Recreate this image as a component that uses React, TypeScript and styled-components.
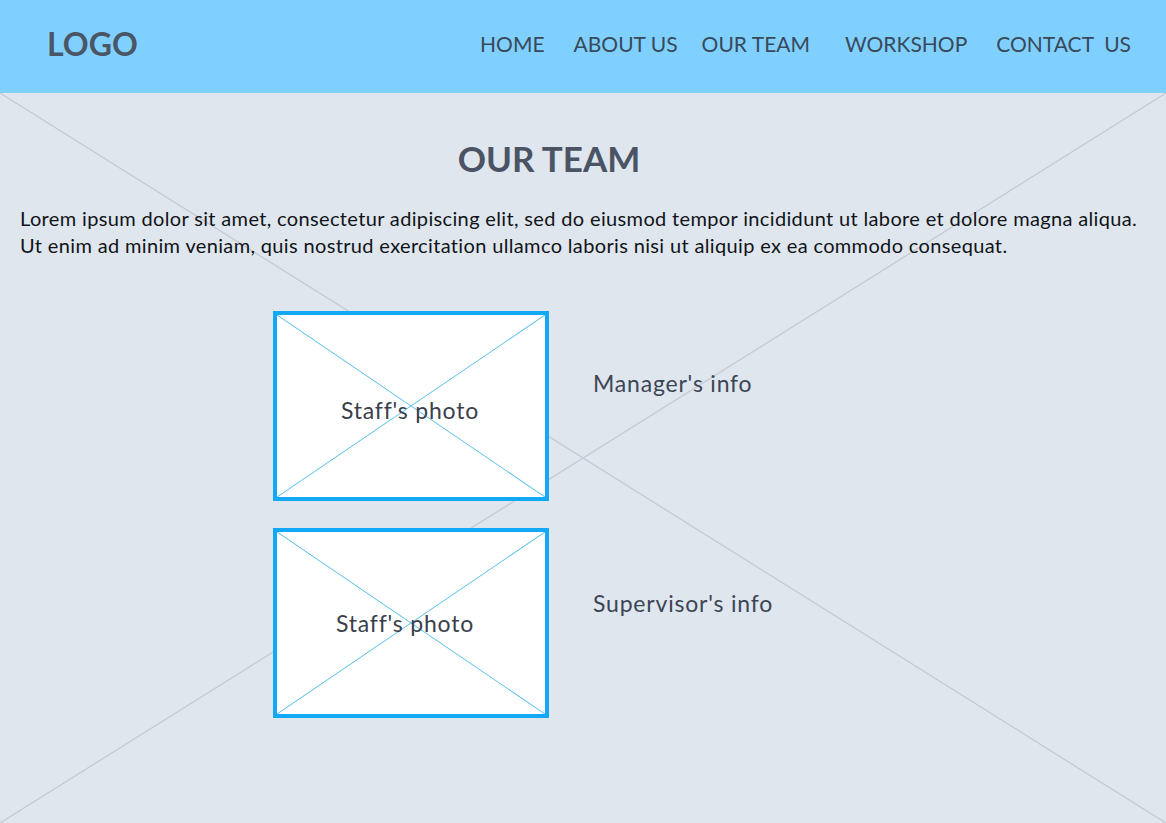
import React from "react";
import styled, { createGlobalStyle } from "styled-components";

const Global = createGlobalStyle`
  html, body { margin: 0; padding: 0; }
  body { font-family: Lato, "Open Sans", sans-serif; background: #dfe6ee; }
  * { box-sizing: border-box; }
`;

const Page = styled.div`
  width: 1166px;
  min-height: 823px;
  display: flex;
  flex-direction: column;
  overflow: hidden;
`;

const Header = styled.header`
  height: 93px;
  flex: none;
  background: #80d0ff;
  display: flex;
  align-items: center;
  justify-content: space-between;
  padding: 0 35px 6px 47px;
`;

const Logo = styled.div`
  font-family: Lato, sans-serif;
  font-weight: 700;
  font-size: 32px;
  line-height: 1;
  color: #4a5666;
`;

const Nav = styled.nav`
  display: flex;
  align-items: center;
`;

const NavLink = styled.a<{ $gap: number }>`
  font-family: Lato, sans-serif;
  font-size: 21px;
  line-height: 1;
  color: #38495a;
  text-decoration: none;
  margin-left: ${(p) => p.$gap}px;
  white-space: pre;
`;

const Main = styled.main`
  position: relative;
  flex: 1;
  min-height: 730px;
  padding: 47px 20px 40px 20px;
  display: flex;
  flex-direction: column;
`;

const Backdrop = styled.svg`
  position: absolute;
  inset: 0;
  width: 100%;
  height: 100%;
  pointer-events: none;
`;

const Content = styled.div`
  position: relative;
  display: flex;
  flex-direction: column;
`;

const Title = styled.h1`
  margin: 0;
  font-family: Lato, sans-serif;
  font-weight: 700;
  font-size: 35px;
  line-height: 36px;
  color: #4a5464;
  text-align: center;
  padding-right: 68px;
`;

const Lead = styled.p`
  margin: 29px 0 0 0;
  font-family: Lato, sans-serif;
  font-size: 20px;
  line-height: 27px;
  letter-spacing: 0.35px;
  font-variant-ligatures: none;
  color: #111418;
  white-space: nowrap;
`;

const Team = styled.div`
  margin-top: 52px;
  padding-left: 253px;
  display: flex;
  flex-direction: column;
  gap: 27px;
`;

const Member = styled.div`
  display: flex;
  align-items: flex-start;
  gap: 44px;
`;

const Photo = styled.div<{ $shift: number }>`
  position: relative;
  width: 276px;
  height: 190px;
  border: 4px solid #12a8f6;
  background: #ffffff;
  display: flex;
  align-items: center;
  justify-content: center;
  padding-top: ${(p) => p.$shift}px;
`;

const PhotoCross = styled.svg`
  position: absolute;
  inset: 0;
  width: 100%;
  height: 100%;
`;

const PhotoLabel = styled.span`
  position: relative;
  font-family: Lato, sans-serif;
  font-size: 23px;
  line-height: 1;
  letter-spacing: 0.8px;
  font-variant-ligatures: none;
  color: #3a404b;
`;

const Info = styled.div<{ $top: number }>`
  padding-top: ${(p) => p.$top}px;
  font-family: Lato, sans-serif;
  font-size: 23px;
  line-height: 1;
  letter-spacing: 0.8px;
  font-variant-ligatures: none;
  color: #3c4554;
`;

const nav = [
  { label: "HOME", gap: 0 },
  { label: "ABOUT US", gap: 29 },
  { label: "OUR TEAM", gap: 24 },
  { label: "WORKSHOP", gap: 35 },
  { label: "CONTACT  US", gap: 29 },
];

const members = [
  { info: "Manager's info", shift: 8, offset: -1, top: 61 },
  { info: "Supervisor's info", shift: -2, offset: -6, top: 64 },
];

function Cross({ color, width }: { color: string; width: number }) {
  return (
    <>
      <line x1="0" y1="0" x2="100" y2="100" stroke={color} strokeWidth={width} vectorEffect="non-scaling-stroke" />
      <line x1="100" y1="0" x2="0" y2="100" stroke={color} strokeWidth={width} vectorEffect="non-scaling-stroke" />
    </>
  );
}

export default function App() {
  return (
    <Page>
      <Global />
      <Header>
        <Logo>LOGO</Logo>
        <Nav>
          {nav.map((n) => (
            <NavLink key={n.label} href="#" $gap={n.gap}>
              {n.label}
            </NavLink>
          ))}
        </Nav>
      </Header>
      <Main>
        <Backdrop viewBox="0 0 100 100" preserveAspectRatio="none">
          <Cross color="#c3cad6" width={1.3} />
        </Backdrop>
        <Content>
          <Title>OUR TEAM</Title>
          <Lead>
            Lorem ipsum dolor sit amet, consectetur adipiscing elit, sed do eiusmod tempor incididunt ut labore et dolore magna aliqua.
            <br />
            Ut enim ad minim veniam, quis nostrud exercitation ullamco laboris nisi ut aliquip ex ea commodo consequat.
          </Lead>
          <Team>
            {members.map((m) => (
              <Member key={m.info}>
                <Photo $shift={m.shift}>
                  <PhotoCross viewBox="0 0 100 100" preserveAspectRatio="none">
                    <Cross color="#5cc0ec" width={1} />
                  </PhotoCross>
                  <PhotoLabel style={{ left: m.offset }}>Staff's photo</PhotoLabel>
                </Photo>
                <Info $top={m.top}>{m.info}</Info>
              </Member>
            ))}
          </Team>
        </Content>
      </Main>
    </Page>
  );
}
